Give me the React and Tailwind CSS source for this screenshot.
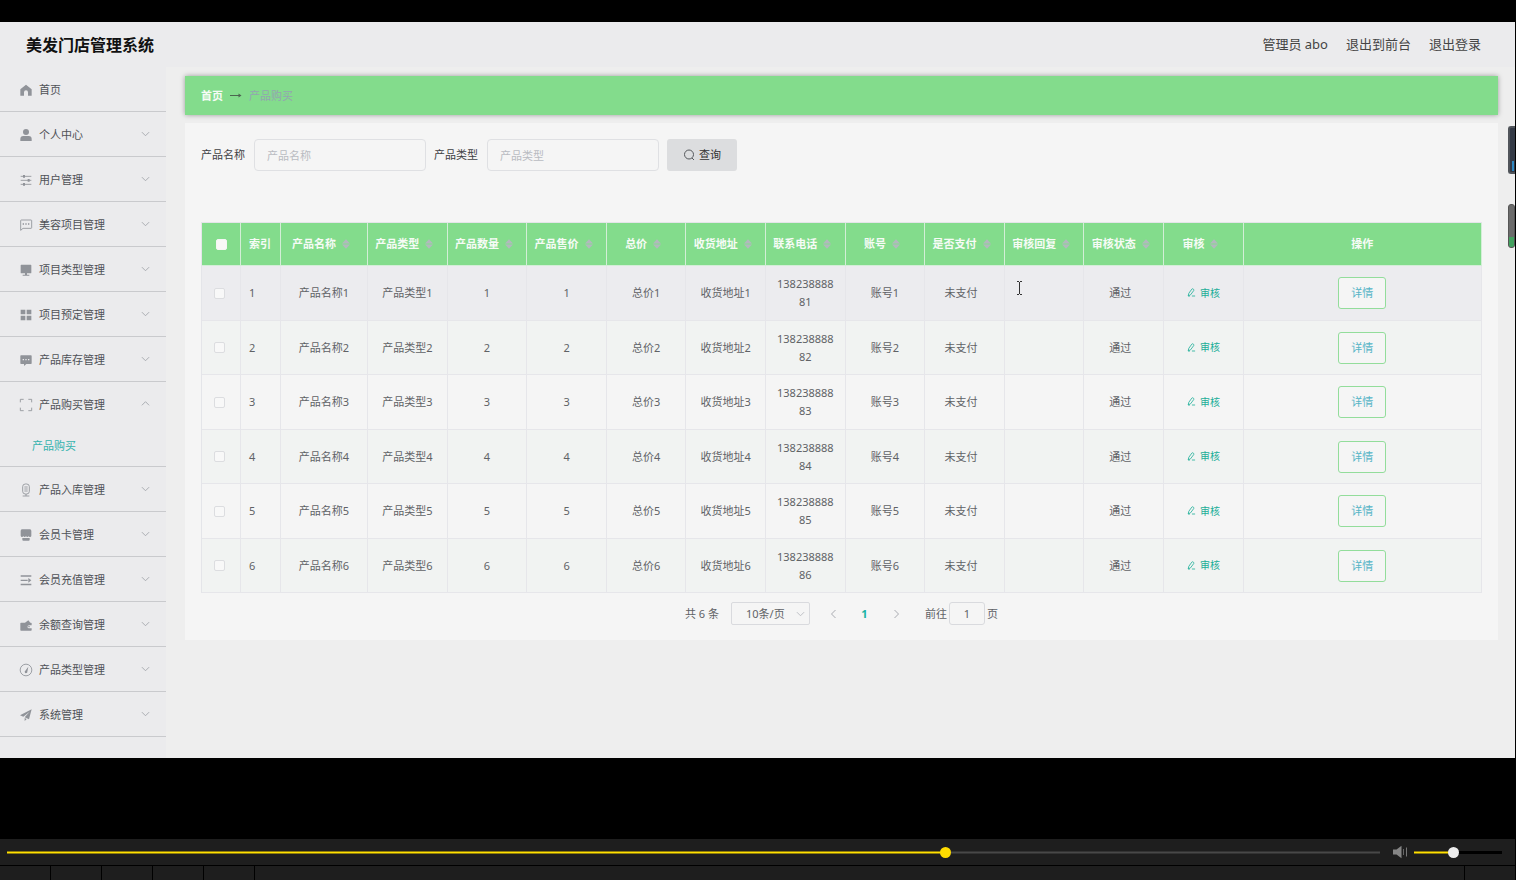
import React from 'react';

const Icon = ({ children }) => (
  <svg viewBox="0 0 36 36" className="size-3 shrink-0 overflow-visible text-[#909399]" fill="currentColor" aria-hidden="true">
    {children}
  </svg>
);

const line = { fill: 'none', stroke: 'currentColor', strokeWidth: 2.6 };

const icons = {
  home: <path d="M1 16 18 2l17 14v19H24V25a6 6 0 0 0-12 0v10H1z" />,
  user: (
    <>
      <circle cx="18" cy="9" r="9" />
      <path d="M1 36v-6q0-9 9-9h16q9 0 9 9v6z" />
    </>
  ),
  operation: (
    <>
      <path {...line} d="M2 7h32M2 19h32M2 31h32" />
      <path d="M9 3h6v8H9zM23 15h6v8h-6zM9 27h6v8H9z" />
    </>
  ),
  chat: (
    <>
      <path {...line} d="M4 3h29q2 0 2 2v21q0 2-2 2H9l-7 6V5q0-2 2-2z" />
      <path d="M8 13h4v4H8zM16 13h4v4h-4zM24 13h4v4h-4z" />
    </>
  ),
  platform: <path d="M4 2h28q2 0 2 2v22q0 2-2 2H4q-2 0-2-2V4q0-2 2-2zM15 28h6v4h7v3H8v-3h7z" />,
  menu: <path d="M2 2h14v14H2zM20 2h14v14H20zM2 20h14v14H2zM20 20h14v14H20z" />,
  comment: (
    <path
      fillRule="evenodd"
      d="M3 4h30q2 0 2 2v22q0 2-2 2H19l-7 6v-6H3q-2 0-2-2V6q0-2 2-2zm5 11v4h4v-4zm8 0v4h4v-4zm8 0v4h4v-4z"
    />
  ),
  full: <path {...line} d="M1 10V1h10M25 1h10v9M35 26v9H25M11 35H1v-9" />,
  mic: (
    <>
      <rect {...line} x="8" y="0" width="20" height="30" rx="8" />
      <path {...line} d="M13 9h10M13 15h10M13 21h10M18 30v6M8 36h20" />
    </>
  ),
  shop: <path d="M6 1h24q4 0 4 5v14q0 4-4 4t-4-3q-1 3-4 3t-4-3q-1 3-4 3t-4-3q-1 3-4 3t-4-4V6q0-5 4-5zM7 27h22v5q0 3-3 3H10q-3 0-3-3z" />,
  unfold: (
    <>
      <path d="M2 4h32v4H2zM2 17h21v4H2zM2 29h32v5H2z" />
      <path d="m25 12 9 7-9 7z" />
    </>
  ),
  wallet: (
    <path
      fillRule="evenodd"
      d="M3 11h12l10-7 6 7h2q2 0 2 2v6h-8a4 4 0 0 0 0 9h8v5q0 2-2 2H3q-2 0-2-2V13q0-2 2-2zm22 10h4v4h-4z"
    />
  ),
  odometer: (
    <>
      <circle {...line} cx="18" cy="18" r="17.5" />
      <path d="m25 8-3 15a4 4 0 1 1-6-3z" />
    </>
  ),
  promotion: <path d="M35 1 0 19l10 4L29 8 14 25l13 6zM14 27v9l6-6z" />,
};

const menu = [
  { icon: 'home', label: '首页', leaf: true },
  { icon: 'user', label: '个人中心' },
  { icon: 'operation', label: '用户管理' },
  { icon: 'chat', label: '美容项目管理' },
  { icon: 'platform', label: '项目类型管理' },
  { icon: 'menu', label: '项目预定管理' },
  { icon: 'comment', label: '产品库存管理' },
  { icon: 'full', label: '产品购买管理', children: ['产品购买'] },
  { icon: 'mic', label: '产品入库管理' },
  { icon: 'shop', label: '会员卡管理' },
  { icon: 'unfold', label: '会员充值管理' },
  { icon: 'wallet', label: '余额查询管理' },
  { icon: 'odometer', label: '产品类型管理' },
  { icon: 'promotion', label: '系统管理' },
];

const columns = [
  '产品名称', '产品类型', '产品数量', '产品售价', '总价', '收货地址',
  '联系电话', '账号', '是否支付', '审核回复', '审核状态', '审核',
];

const rows = [1, 2, 3, 4, 5, 6].map((n) => ({
  id: n,
  cells: [
    { text: `产品名称${n}` },
    { text: `产品类型${n}` },
    { text: `${n}` },
    { text: `${n}` },
    { text: `总价${n}` },
    { text: `收货地址${n}` },
    { text: `1382388888${n}` },
    { text: `账号${n}` },
    { text: '未支付', status: true },
    { text: '' },
    { text: '通过', status: true },
  ],
}));

function Chevron({ dir = 'down', className = '' }) {
  const d = { down: 'M1 3.5 5 7.5 9 3.5', up: 'M1 7 5 3 9 7', left: 'M6.5 1 2.5 5l4 4', right: 'M3.5 1l4 4-4 4' }[dir];
  return (
    <svg viewBox="0 0 10 10" className={`shrink-0 ${className}`} fill="none" stroke="currentColor" aria-hidden="true">
      <path d={d} />
    </svg>
  );
}

function Sidebar() {
  return (
    <nav className="w-[166px] shrink-0 bg-[#ebebed] pb-[21px]">
      <ul>
        {menu.map((m) => (
          <li key={m.label} className="border-b border-[#c9cacd]">
            <a href="#" className="flex h-11 items-center gap-[7px] pt-[2px] pr-4 pl-5 text-[#4f5257]">
              <Icon>{icons[m.icon]}</Icon>
              <span className="flex-1">{m.label}</span>
              {!m.leaf && <Chevron dir={m.children ? 'up' : 'down'} className="mb-1 size-[9px] text-[#a3a6ac]" />}
            </a>
            {m.children && (
              <ul>
                {m.children.map((c) => (
                  <li key={c}>
                    <a href="#" className="flex h-10 items-center pl-8 text-[#35b3ae]">{c}</a>
                  </li>
                ))}
              </ul>
            )}
          </li>
        ))}
      </ul>
    </nav>
  );
}

function SearchBar() {
  const box =
    'h-8 w-[172px] rounded border border-[#dfe0e3] bg-[#f5f5f5] px-3 placeholder:text-[#b9bbc1] outline-none';
  return (
    <form className="flex items-center gap-2">
      <label htmlFor="name" className="mr-px text-[#3f4144]">产品名称</label>
      <input id="name" className={box} placeholder="产品名称" />
      <label htmlFor="type" className="mr-px text-[#3f4144]">产品类型</label>
      <input id="type" className={box} placeholder="产品类型" />
      <button type="button" className="flex h-8 w-[70px] items-center justify-center gap-1 rounded-[3px] bg-[#dcdddf] text-[#333]">
        <svg viewBox="0 0 12 12" className="size-3" fill="none" stroke="#55585c" aria-hidden="true">
          <circle cx="6" cy="5.5" r="4.5" />
          <path d="m9 9 2 2" />
        </svg>
        查询
      </button>
    </form>
  );
}

const check = 'block size-[11px] appearance-none rounded-[2px] border bg-[#f8f8f8]';

function DataTable() {
  return (
    <table className="w-full table-fixed border-separate border-spacing-0 border-t border-l border-[#e4e5e9] text-center">
      <colgroup>
        <col className="w-[39px]" />
        <col className="w-10" />
        <col className="w-[87px]" />
        {columns.slice(1).map((c) => (
          <col key={c} className="w-[6.22%]" />
        ))}
        <col />
      </colgroup>
      <thead>
        <tr className="h-[43px] bg-[#83dc8c] text-[#f6fbf6] [&>th]:border-r [&>th]:border-b [&>th]:border-[#d3eed7] [&>th]:font-bold">
          <th>
            <input type="checkbox" aria-label="全选" className={`${check} mx-auto border-[#f4f6f4]`} />
          </th>
          <th className="pl-2 text-left">索引</th>
          {columns.map((c) => (
            <th key={c}>
              <span className="flex items-center justify-center">
                {c}
                <svg viewBox="0 0 20 10" className="h-[10px] w-5" fill="#b2b9bd" aria-hidden="true">
                  <path d="M6 4.5 10 .2l4 4.300zM6 5.500h8L10 9.800z" />
                </svg>
              </span>
            </th>
          ))}
          <th>操作</th>
        </tr>
      </thead>
      <tbody className="text-[#606266]">
        {rows.map((r) => (
          <tr
            key={r.id}
            className="odd:h-[55px] odd:bg-[#f5f5f5] even:h-[54px] even:bg-[#f1f3f2] [&:first-child]:bg-[#ececef] [&>td]:border-r [&>td]:border-b [&>td]:border-[#e6e6ea]"
          >
            <td>
              <input type="checkbox" aria-label={`选择第${r.id}行`} className={`${check} ml-3 border-[#dcdde0]`} />
            </td>
            <td className="pl-2 text-left">{r.id}</td>
            {r.cells.map((c, i) => (
              <td key={i} className={`pl-2 leading-[18px] break-all ${c.status ? 'pr-[15px]' : 'pr-2'}`}>{c.text}</td>
            ))}
            <td>
              <a href="#" className="inline-flex items-center gap-1 text-[10px] text-[#1cae98]">
                <svg viewBox="0 0 10 10" className="size-[9px]" fill="none" stroke="currentColor" strokeWidth="0.9" aria-hidden="true">
                  <path d="M1.3 8.7 2 5.9 5.4 1.2q.6-.7 1.3-.2l.7.6q.6.6.1 1.2L4 7.5zM1.3 8.9h2M5.5 8.9H9" />
                </svg>
                审核
              </a>
            </td>
            <td>
              <button type="button" className="h-8 w-12 rounded-[3px] border border-[#93dd9b] bg-[#f5f5f5] text-[#56b4c6]">
                详情
              </button>
            </td>
          </tr>
        ))}
      </tbody>
    </table>
  );
}

function Pagination() {
  return (
    <div className="flex items-center justify-center pt-[9px] text-[#606266]">
      <span>共 6 条</span>
      <span className="relative ml-3 block">
        <select aria-label="每页条数" className="h-[23px] w-[79px] appearance-none rounded-[2px] border border-[#d9dade] bg-transparent pl-[14px] outline-none">
          <option>10条/页</option>
        </select>
        <Chevron className="pointer-events-none absolute top-[7px] right-[5px] size-[9px] text-[#b9bbc1]" />
      </span>
      <button type="button" aria-label="上一页" className="ml-2 flex w-[31px] justify-center text-[#a9abb1]">
        <Chevron dir="left" className="size-[10px]" />
      </button>
      <button type="button" className="w-[31px] font-bold text-[#17b3a3]">1</button>
      <button type="button" aria-label="下一页" className="flex w-[31px] justify-center text-[#a9abb1]">
        <Chevron dir="right" className="size-[10px]" />
      </button>
      <label htmlFor="page" className="ml-[14px]">前往</label>
      <input id="page" defaultValue="1" className="mx-[2px] h-[23px] w-9 rounded-[3px] border border-[#d9dade] bg-transparent text-center outline-none" />
      <span>页</span>
    </div>
  );
}

function Player() {
  return (
    <footer className="mt-auto mr-px bg-[#1e1e1e]">
      <div className="flex h-[27px] items-center border-b border-black pr-[13px] pl-[7px]">
        <input
          type="range"
          aria-label="播放进度"
          defaultValue="685"
          max="1000"
          className="h-[3px] min-w-0 flex-1 appearance-none bg-[linear-gradient(#8f7d0c_1px,#ffe000_1px,#ffe000_2px,#8f7d0c_2px),linear-gradient(#333_1px,#484848_1px,#484848_2px,#333_2px)] bg-[length:68.4%_100%,100%_100%] bg-no-repeat [&::-webkit-slider-thumb]:size-[11px] [&::-webkit-slider-thumb]:appearance-none [&::-webkit-slider-thumb]:rounded-full [&::-webkit-slider-thumb]:bg-[#ffdc00]"
        />
        <button type="button" aria-label="音量" className="ml-3">
          <svg viewBox="0 0 16 14" className="h-[14px] w-4" aria-hidden="true">
            <path d="M1 4.5h3.5L9.5.8v12.400L4.500 9.500H1z" fill="#858585" />
            <path d="M11.500 4v6" stroke="#666" />
            <path d="M14.500 2.500v9" stroke="#777" />
          </svg>
        </button>
        <input
          type="range"
          aria-label="音量大小"
          defaultValue="44"
          className="ml-[6px] h-[3px] w-[88px] appearance-none bg-[linear-gradient(#8f7d0c_1px,#ffe000_1px,#ffe000_2px,#8f7d0c_2px),linear-gradient(#000,#000)] bg-[length:44%_100%,100%_100%] bg-no-repeat [&::-webkit-slider-thumb]:size-[11px] [&::-webkit-slider-thumb]:appearance-none [&::-webkit-slider-thumb]:rounded-full [&::-webkit-slider-thumb]:bg-[#ececec]"
        />
      </div>
      <div className="flex h-[14px]">
        {[0, 1, 2, 3, 4].map((i) => (
          <span key={i} className="w-[51px] border-r border-black" />
        ))}
        <span className="flex-1 border-r border-black" />
        <span className="w-[50px]" />
      </div>
    </footer>
  );
}

export default function App() {
  return (
    <div className="flex min-h-screen flex-col bg-black pt-[22px] font-['Noto_Sans','Noto_Sans_CJK_SC',sans-serif] text-[11px] leading-4">
      <div className="relative mr-px bg-[#eee]">
        <header className="flex h-[45px] items-center justify-between bg-[#ebebed] pr-[34px] pl-[26px]">
          <h1 className="text-base font-bold text-[#111]">美发门店管理系统</h1>
          <div className="flex gap-[18px] pb-[2px] text-[13px] text-[#444]">
            <span>管理员 abo</span>
            <a href="#">退出到前台</a>
            <a href="#">退出登录</a>
          </div>
        </header>
        <div className="flex">
          <Sidebar />
          <main className="min-w-0 flex-1 pt-[9px] pr-[17px] pl-[19px]">
            <div className="flex h-[39px] items-center bg-[#83dc8c] px-4 shadow-[0_0_5px_rgba(0,0,0,0.35)]">
              <a href="#" className="font-bold text-[#f6fbf6]">首页</a>
              <svg viewBox="0 0 12 8" className="mx-[7px] h-2 w-3" aria-hidden="true">
                <path d="M0 3.500h10" stroke="#4c6650" />
                <path d="M8.500 1.500 11.500 3.500 8.500 5.500z" fill="#4c6650" />
              </svg>
              <span className="text-[#93a5b0]">产品购买</span>
            </div>
            <section className="mt-2 bg-[#f5f5f5] px-4 pt-4 pb-[15px]">
              <SearchBar />
              <div className="pt-[51px]">
                <DataTable />
              </div>
              <Pagination />
            </section>
          </main>
        </div>
        <div className="absolute top-[104px] right-0 flex h-12 w-[7px] items-end justify-end rounded-l-[3px] border-2 border-r-0 border-[#50545a] bg-[#343a46] pb-px">
          <span className="mr-px h-[10px] w-[2px] bg-[#2e86c0]" />
        </div>
        <div className="absolute top-[182px] right-0 flex h-11 w-[7px] items-end overflow-hidden rounded-[3px] border border-[#555] bg-[#6b6b6b]">
          <span className="h-[10px] w-full bg-[#43a15f]" />
        </div>
        <svg viewBox="0 0 7 14" className="absolute top-[259px] left-[1016px] h-[14px] w-[7px]" fill="none" stroke="#333" aria-hidden="true">
          <path d="M1 .5h2M4 .5h2M3.500 1v12M1 13.500h2M4 13.500h2" />
        </svg>
      </div>
      <Player />
    </div>
  );
}
